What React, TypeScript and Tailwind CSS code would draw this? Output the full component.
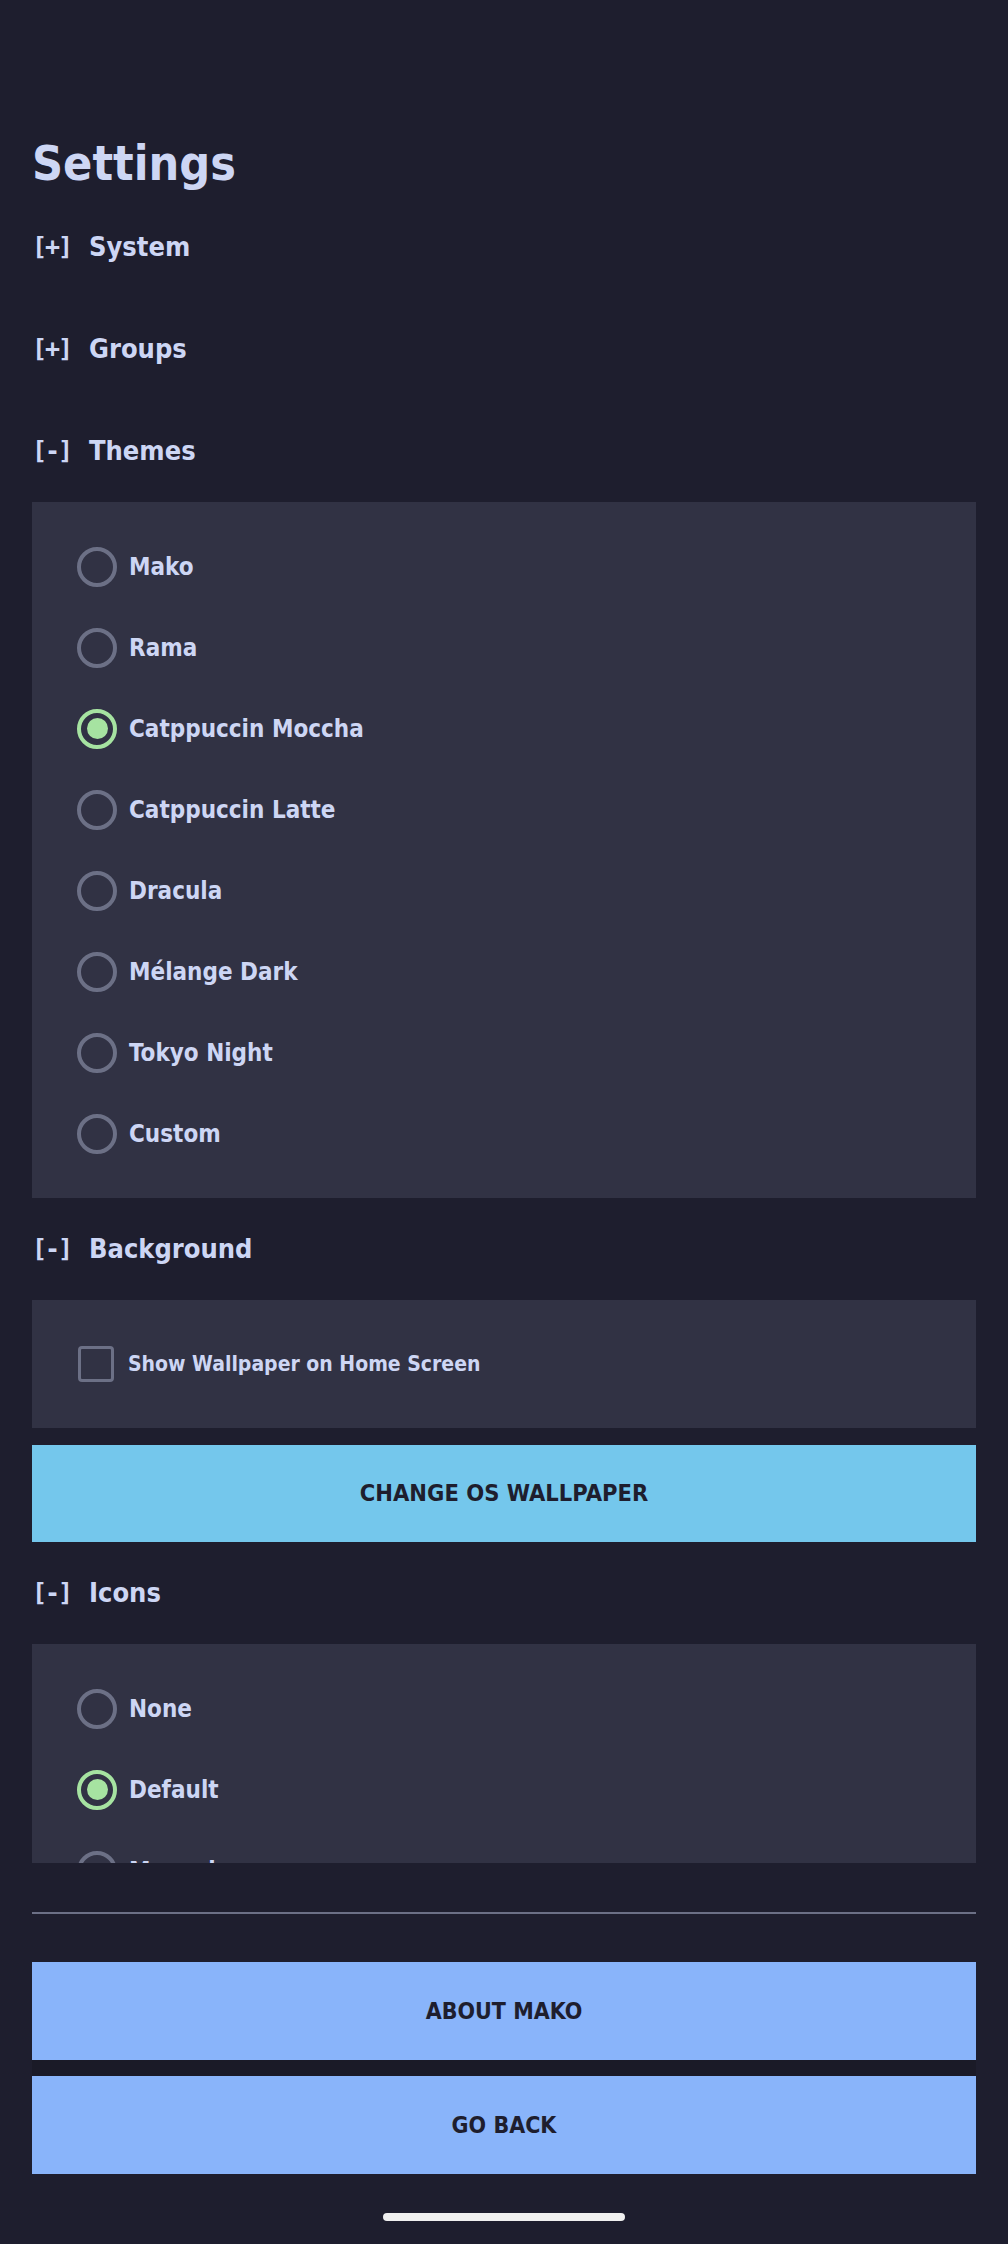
import React from "react";

const font = { fontFamily: '"DejaVu Sans Condensed", "Liberation Sans Narrow", "DejaVu Sans", sans-serif' };
const mono = { fontFamily: '"DejaVu Sans Mono", "Liberation Mono", monospace' };

const themes = ["Mako", "Rama", "Catppuccin Moccha", "Catppuccin Latte", "Dracula", "Mélange Dark", "Tokyo Night", "Custom"];
const icons = ["None", "Default", "Monochrome"];

function Header({ open, label }: { open: boolean; label: string }) {
  return (
    <div className="h-[102px] flex items-center text-[#cdd6f4] text-[27px] font-bold">
      <span className="w-[57px] shrink-0 text-[25px] font-bold tracking-[-2px]" style={mono}>
        {open ? "[-]" : "[+]"}
      </span>
      <span>{label}</span>
    </div>
  );
}

function Radio({ label, checked }: { label: string; checked?: boolean }) {
  return (
    <div className="h-[81px] flex items-center gap-3">
      <div
        className={
          checked
            ? "w-10 h-10 rounded-full border-4 border-[#a6e3a1] flex items-center justify-center"
            : "w-10 h-10 rounded-full border-4 border-[#6c7086]"
        }
      >
        {checked && <div className="w-[21px] h-[21px] rounded-full bg-[#a6e3a1]" />}
      </div>
      <span className="text-[24px] leading-[32px] font-bold text-[#cdd6f4]">{label}</span>
    </div>
  );
}

export default function App() {
  return (
    <div className="w-[1008px] h-[2244px] bg-[#1e1e2e] flex flex-col" style={font}>
      {/* scrollable settings list */}
      <div className="h-[1863px] overflow-hidden px-8 pt-[130px]">
        <h1 className="h-[66px] flex items-center text-[48px] font-bold text-[#cdd6f4]">Settings</h1>
        <Header open={false} label="System" />
        <Header open={false} label="Groups" />
        <Header open label="Themes" />
        <div className="bg-[#313244] py-6 pl-[45px]">
          {themes.map((t) => (
            <Radio key={t} label={t} checked={t === "Catppuccin Moccha"} />
          ))}
        </div>
        <Header open label="Background" />
        <div className="bg-[#313244] h-32 flex items-center pl-[46px] gap-[14px]">
          <div className="w-9 h-9 rounded-[4px] border-[3px] border-[#6c7086]" />
          <span className="text-[21px] leading-[28px] font-bold text-[#cdd6f4]">Show Wallpaper on Home Screen</span>
        </div>
        <button className="mt-[17px] w-full h-[97px] bg-[#74c7ec] text-[#1e1e2e] text-[23.5px] font-bold uppercase">
          Change OS Wallpaper
        </button>
        <Header open label="Icons" />
        <div className="bg-[#313244] pt-6 pl-[45px]">
          {icons.map((t) => (
            <Radio key={t} label={t} checked={t === "Default"} />
          ))}
        </div>
      </div>

      {/* footer */}
      <div className="px-8 pt-[49px]">
        <div className="h-[2px] bg-[#6c7086]" />
        <button className="mt-[48px] w-full h-[98px] bg-[#89b4fa] text-[#1e1e2e] text-[23px] font-bold uppercase shadow-[0_16px_0_#1a1a27]">
          About Mako
        </button>
        <button className="mt-4 w-full h-[98px] bg-[#89b4fa] text-[#1e1e2e] text-[23px] font-bold uppercase">
          Go Back
        </button>
      </div>
      <div className="mt-[39px] flex justify-center">
        <div className="w-[242px] h-2 rounded-full bg-[#f0f0f0]" />
      </div>
    </div>
  );
}
